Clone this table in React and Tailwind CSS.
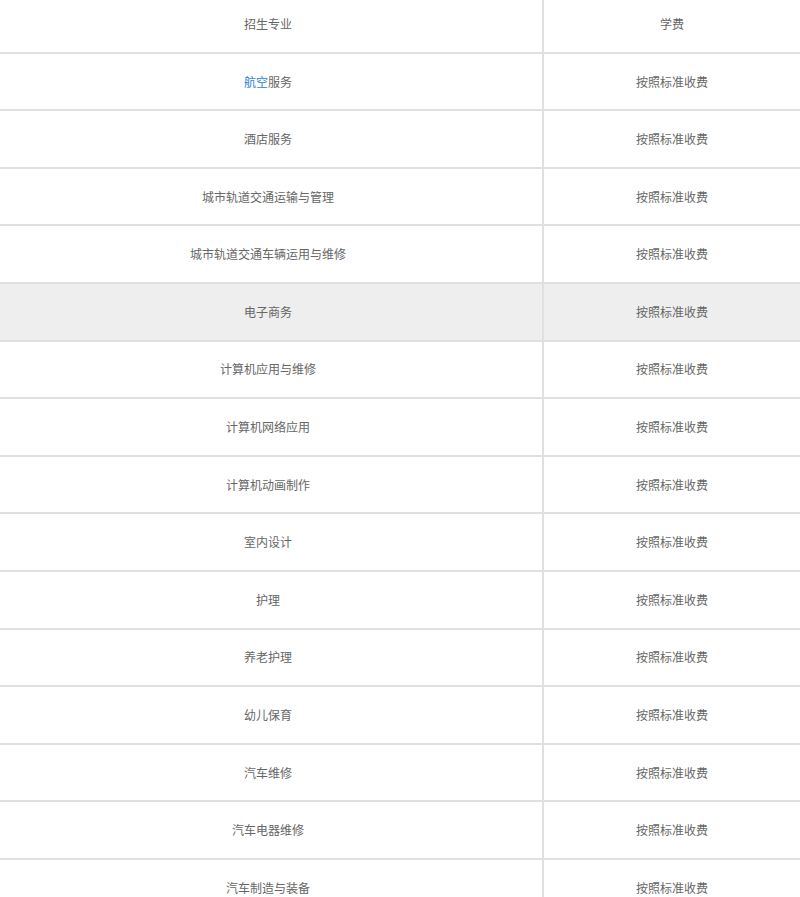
import React from "react";

const rows = [
  "航空服务",
  "酒店服务",
  "城市轨道交通运输与管理",
  "城市轨道交通车辆运用与维修",
  "电子商务",
  "计算机应用与维修",
  "计算机网络应用",
  "计算机动画制作",
  "室内设计",
  "护理",
  "养老护理",
  "幼儿保育",
  "汽车维修",
  "汽车电器维修",
  "汽车制造与装备",
];

function Row({ left, right, hl }) {
  return (
    <div className={`flex h-[57.6px] shrink-0 border-b-2 border-[#e0e0e0] ${hl ? "bg-[#eeeeee]" : "bg-white"}`}>
      <div className="w-[544px] shrink-0 border-r-2 border-[#e0e0e0] pr-[6px] flex items-center justify-center">{left}</div>
      <div className="flex-1 flex items-center justify-center">{right}</div>
    </div>
  );
}

export default function App() {
  return (
    <div className="w-[800px] h-[897px] overflow-hidden bg-white text-[12px] text-[#666666] font-['Microsoft_YaHei','Noto_Sans_CJK_SC',sans-serif]">
      <div className="flex flex-col mt-[-3.9px]">
        <Row left="招生专业" right="学费" />
        {rows.map((r, i) => (
          <Row
            key={i}
            hl={r === "电子商务"}
            left={
              i === 0 ? (
                <span>
                  <span className="text-[#2b7fd6]">航空</span>服务
                </span>
              ) : (
                r
              )
            }
            right="按照标准收费"
          />
        ))}
      </div>
    </div>
  );
}
